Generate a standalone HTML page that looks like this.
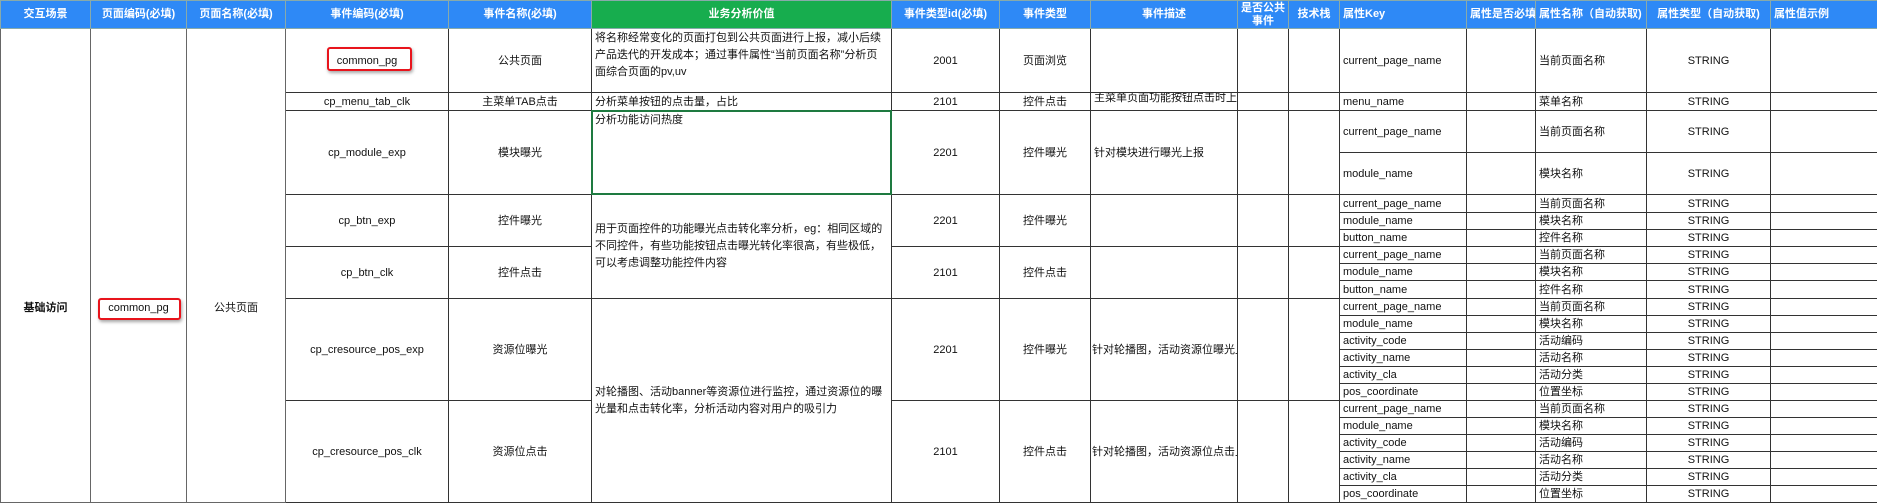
<!DOCTYPE html>
<html><head><meta charset="utf-8"><style>
*{margin:0;padding:0;box-sizing:border-box}
body{width:1877px;height:503px;overflow:hidden;background:#fff;font-family:"Liberation Sans","Noto Sans CJK SC",sans-serif;font-size:11px;color:#111}
table{border-collapse:collapse;table-layout:fixed;width:1877px;position:absolute;left:0;top:0}
td,th{border:1px solid #333;overflow:hidden;white-space:nowrap;padding:0 3px;line-height:14px}
th{background:#2e89f6;color:#fff;font-weight:bold;height:28px;border-color:#8aa;line-height:13px;font-size:11px}
th.g{background:#17ad4e}
th.l{text-align:left}
th.wr{white-space:normal}
.c{text-align:center}
.l{text-align:left}
.w{white-space:normal;vertical-align:top;line-height:17px;padding:1px 3px}
.wm{white-space:normal;line-height:17px;padding:1px 3px}
.v{border-color:#666;vertical-align:top;padding-top:272px}
.red{position:absolute;border:2px solid #e8141c;border-radius:3px;box-shadow:1px 2px 3px rgba(0,0,0,.35)}
.gb{position:absolute;border:2px solid #1e7a40}
</style></head><body>
<table>
<colgroup><col style="width:90px"><col style="width:96px"><col style="width:99px"><col style="width:163px"><col style="width:143px"><col style="width:300px"><col style="width:108px"><col style="width:91px"><col style="width:147px"><col style="width:51px"><col style="width:51px"><col style="width:127px"><col style="width:69px"><col style="width:111px"><col style="width:124px"><col style="width:107px"></colgroup>
<tr><th>交互场景</th><th>页面编码(必填)</th><th>页面名称(必填)</th><th>事件编码(必填)</th><th>事件名称(必填)</th><th class="g">业务分析价值</th><th>事件类型id(必填)</th><th>事件类型</th><th>事件描述</th><th class="wr">是否公共事件</th><th>技术栈</th><th class="l">属性Key</th><th>属性是否必填</th><th class="l">属性名称（自动获取)</th><th>属性类型（自动获取)</th><th class="l">属性值示例</th></tr>
<tr style="height:64px"><td rowspan="22" class="c v" style="font-weight:bold">基础访问</td><td rowspan="22" class="c v">common_pg</td><td rowspan="22" class="c v">公共页面</td>
<td class="c">common_pg</td><td class="c">公共页面</td><td class="w">将名称经常变化的页面打包到公共页面进行上报，减小后续产品迭代的开发成本；通过事件属性“当前页面名称”分析页面综合页面的pv,uv</td><td class="c">2001</td><td class="c">页面浏览</td><td></td><td></td><td></td><td class="l">current_page_name</td><td></td><td class="l">当前页面名称</td><td class="c">STRING</td><td></td></tr>
<tr style="height:18px"><td class="c">cp_menu_tab_clk</td><td class="c">主菜单TAB点击</td><td class="l">分析菜单按钮的点击量，占比</td><td class="c">2101</td><td class="c">控件点击</td><td class="l" style="vertical-align:top;line-height:10px">主菜单页面功能按钮点击时上报</td><td></td><td></td><td class="l">menu_name</td><td></td><td class="l">菜单名称</td><td class="c">STRING</td><td></td></tr>
<tr style="height:42px"><td rowspan="2" class="c">cp_module_exp</td><td rowspan="2" class="c">模块曝光</td><td rowspan="2" class="w">分析功能访问热度</td><td rowspan="2" class="c">2201</td><td rowspan="2" class="c">控件曝光</td><td rowspan="2" class="l">针对模块进行曝光上报</td><td rowspan="2"></td><td rowspan="2"></td><td class="l">current_page_name</td><td></td><td class="l">当前页面名称</td><td class="c">STRING</td><td></td></tr>
<tr style="height:42px"><td class="l">module_name</td><td></td><td class="l">模块名称</td><td class="c">STRING</td><td></td></tr>
<tr style="height:18px"><td rowspan="3" class="c">cp_btn_exp</td><td rowspan="3" class="c">控件曝光</td><td rowspan="6" class="wm">用于页面控件的功能曝光点击转化率分析，eg：相同区域的不同控件，有些功能按钮点击曝光转化率很高，有些极低，可以考虑调整功能控件内容</td><td rowspan="3" class="c">2201</td><td rowspan="3" class="c">控件曝光</td><td rowspan="3"></td><td rowspan="3"></td><td rowspan="3"></td><td class="l">current_page_name</td><td></td><td class="l">当前页面名称</td><td class="c">STRING</td><td></td></tr>
<tr style="height:17px"><td class="l">module_name</td><td></td><td class="l">模块名称</td><td class="c">STRING</td><td></td></tr>
<tr style="height:17px"><td class="l">button_name</td><td></td><td class="l">控件名称</td><td class="c">STRING</td><td></td></tr>
<tr style="height:17px"><td rowspan="3" class="c">cp_btn_clk</td><td rowspan="3" class="c">控件点击</td><td rowspan="3" class="c">2101</td><td rowspan="3" class="c">控件点击</td><td rowspan="3"></td><td rowspan="3"></td><td rowspan="3"></td><td class="l">current_page_name</td><td></td><td class="l">当前页面名称</td><td class="c">STRING</td><td></td></tr>
<tr style="height:17px"><td class="l">module_name</td><td></td><td class="l">模块名称</td><td class="c">STRING</td><td></td></tr>
<tr style="height:18px"><td class="l">button_name</td><td></td><td class="l">控件名称</td><td class="c">STRING</td><td></td></tr>
<tr style="height:17px"><td rowspan="6" class="c">cp_cresource_pos_exp</td><td rowspan="6" class="c">资源位曝光</td><td rowspan="12" class="wm">对轮播图、活动banner等资源位进行监控，通过资源位的曝光量和点击转化率，分析活动内容对用户的吸引力</td><td rowspan="6" class="c">2201</td><td rowspan="6" class="c">控件曝光</td><td rowspan="6" class="l" style="padding:0 1px">针对轮播图，活动资源位曝光上报</td><td rowspan="6"></td><td rowspan="6"></td><td class="l">current_page_name</td><td></td><td class="l">当前页面名称</td><td class="c">STRING</td><td></td></tr>
<tr style="height:17px"><td class="l">module_name</td><td></td><td class="l">模块名称</td><td class="c">STRING</td><td></td></tr>
<tr style="height:17px"><td class="l">activity_code</td><td></td><td class="l">活动编码</td><td class="c">STRING</td><td></td></tr>
<tr style="height:17px"><td class="l">activity_name</td><td></td><td class="l">活动名称</td><td class="c">STRING</td><td></td></tr>
<tr style="height:17px"><td class="l">activity_cla</td><td></td><td class="l">活动分类</td><td class="c">STRING</td><td></td></tr>
<tr style="height:17px"><td class="l">pos_coordinate</td><td></td><td class="l">位置坐标</td><td class="c">STRING</td><td></td></tr>
<tr style="height:17px"><td rowspan="6" class="c">cp_cresource_pos_clk</td><td rowspan="6" class="c">资源位点击</td><td rowspan="6" class="c">2101</td><td rowspan="6" class="c">控件点击</td><td rowspan="6" class="l" style="padding:0 1px">针对轮播图，活动资源位点击上报</td><td rowspan="6"></td><td rowspan="6"></td><td class="l">current_page_name</td><td></td><td class="l">当前页面名称</td><td class="c">STRING</td><td></td></tr>
<tr style="height:17px"><td class="l">module_name</td><td></td><td class="l">模块名称</td><td class="c">STRING</td><td></td></tr>
<tr style="height:17px"><td class="l">activity_code</td><td></td><td class="l">活动编码</td><td class="c">STRING</td><td></td></tr>
<tr style="height:17px"><td class="l">activity_name</td><td></td><td class="l">活动名称</td><td class="c">STRING</td><td></td></tr>
<tr style="height:17px"><td class="l">activity_cla</td><td></td><td class="l">活动分类</td><td class="c">STRING</td><td></td></tr>
<tr style="height:17px"><td class="l">pos_coordinate</td><td></td><td class="l">位置坐标</td><td class="c">STRING</td><td></td></tr>
</table>
<div class="red" style="left:327px;top:47px;width:85px;height:24px"></div>
<div class="red" style="left:98px;top:298px;width:83px;height:22px"></div>
<div class="gb" style="left:591px;top:110px;width:301px;height:85px"></div>
</body></html>
